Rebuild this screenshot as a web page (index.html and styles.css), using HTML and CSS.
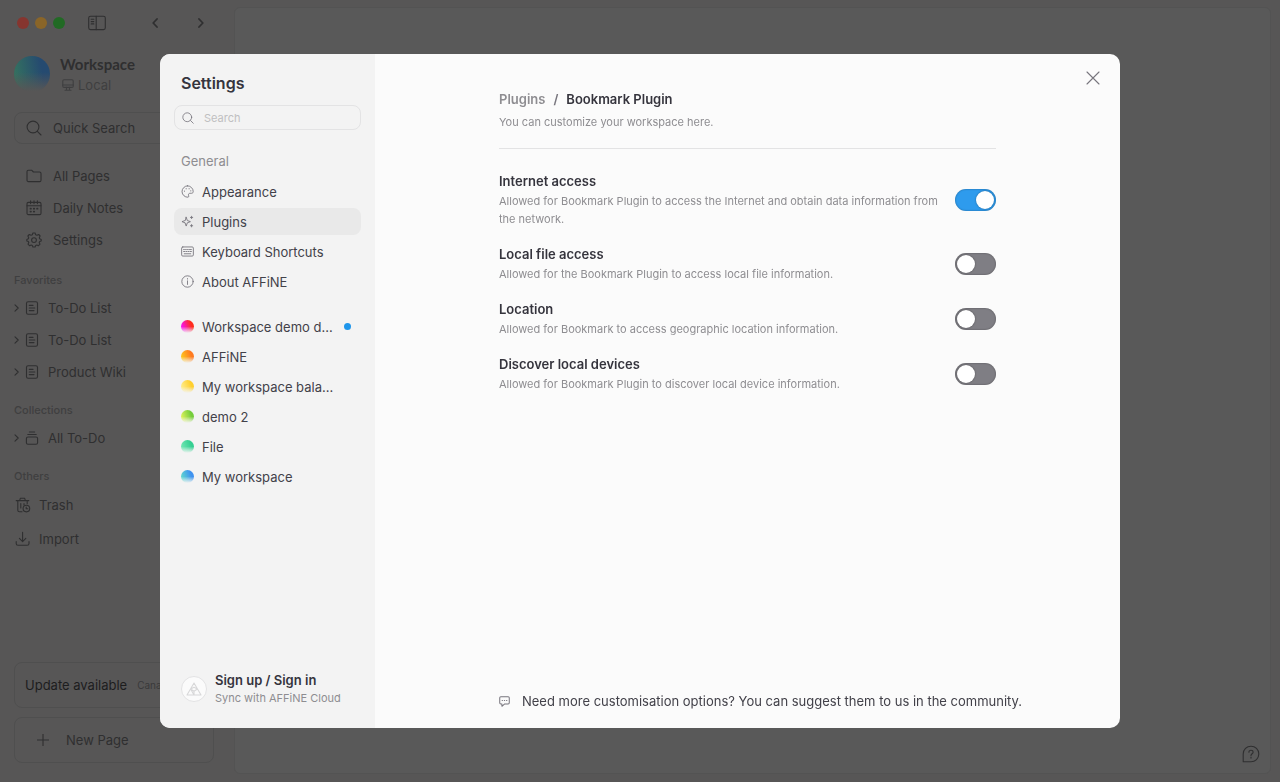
FILE: index.html
```html
<!DOCTYPE html>
<html lang="en">
<head>
    <meta charset="UTF-8">
    <meta name="viewport" content="width=device-width, initial-scale=1.0">
    <title>AFFiNE - Settings</title>
    <link rel="stylesheet" href="styles.css">
</head>
<body>
    <svg class="sprite" aria-hidden="true">
        <symbol id="icon-search" viewBox="0 0 16 16">
            <circle cx="7" cy="7" r="5.9"/>
            <path d="M11.4 11.4L15 15"/>
        </symbol>
        <symbol id="icon-chevron" viewBox="0 0 6 8">
            <path d="M1 .8L4.2 4L1 7.2"/>
        </symbol>
        <symbol id="icon-page" viewBox="0 0 14 14">
            <rect x="1.5" y=".7" width="11" height="12.6" rx="1.6"/>
            <path d="M4.3 4.4H8M4.3 7H9.8M4.3 9.6H9"/>
        </symbol>
    </svg>

    <div class="app">
        <aside class="sidebar">
            <div class="window-bar">
                <span class="light red"></span>
                <span class="light yellow"></span>
                <span class="light green"></span>
                <button class="toggle-sidebar" aria-label="Toggle sidebar">
                    <svg width="18" height="16" viewBox="0 0 18 16">
                        <rect x=".7" y="1.2" width="16.6" height="13.4" rx="1.8"/>
                        <path d="M8.2 1.2V14.6M3.2 4.3H5.8M3.2 6.6H5.8M3.2 8.9H5.8"/>
                    </svg>
                </button>
                <button class="nav-back" aria-label="Back">
                    <svg class="bold" width="6" height="10" viewBox="0 0 6 10"><path d="M5 1L1.2 5L5 9"/></svg>
                </button>
                <button class="nav-forward" aria-label="Forward">
                    <svg class="bold" width="6" height="10" viewBox="0 0 6 10"><path d="M1 1L4.8 5L1 9"/></svg>
                </button>
            </div>

            <div class="workspace">
                <span class="workspace-avatar"></span>
                <div>
                    <div class="workspace-name">Workspace</div>
                    <div class="workspace-type">
                        <svg width="12" height="12" viewBox="0 0 12 12">
                            <rect x=".8" y=".8" width="10.4" height="7.6" rx="1.2"/>
                            <path d="M.8 6H11.2M4.5 8.4V11M7.5 8.4V11M3 11.2H9"/>
                        </svg>
                        Local
                    </div>
                </div>
            </div>

            <button class="quick-search">
                <svg width="16" height="16"><use href="#icon-search"/></svg>
                Quick Search
            </button>

            <nav class="main-nav">
                <a href="#">
                    <svg width="16" height="16" viewBox="0 0 16 16">
                        <path d="M1 3.6C1 2.8 1.6 2.2 2.4 2.2H5.6L7.4 4H13.6C14.4 4 15 4.6 15 5.4V12.2C15 13 14.4 13.6 13.6 13.6H2.4C1.6 13.6 1 13 1 12.2Z"/>
                    </svg>
                    All Pages
                </a>
                <a href="#">
                    <svg width="16" height="16" viewBox="0 0 16 16">
                        <rect x="1" y="2.4" width="14" height="12.2" rx="1.4"/>
                        <path d="M1 5.8H15M4.6 .8V3.6M8 .8V3.6M11.4 .8V3.6"/>
                        <path class="bold" d="M7.8 8.7H8.2M11.1 8.7H11.5M4.5 8.7H4.9M4.5 11.6H4.9M7.8 11.6H8.2"/>
                    </svg>
                    Daily Notes
                </a>
                <a href="#">
                    <svg width="16" height="16" viewBox="0 0 16 16">
                        <path d="M6.9 1H9.1L9.7 2.8L11 3.3L12.7 2.5L14.1 4L13.3 5.8L13.7 6.8L15.2 7.4V9L13.7 9.5L13.2 10.6L14 12.2L12.5 13.7L10.8 13L9.7 13.4L9.1 15H6.9L6.3 13.4L5.2 13L3.5 13.7L2 12.2L2.8 10.6L2.3 9.5L.8 9V7.4L2.3 6.8L2.7 5.8L1.9 4L3.3 2.5L5 3.3L6.3 2.8Z"/>
                        <circle cx="8" cy="8.1" r="2.4"/>
                    </svg>
                    Settings
                </a>
            </nav>

            <h2 class="group-title">Favorites</h2>
            <nav class="page-list">
                <a href="#">
                    <svg width="6" height="8"><use href="#icon-chevron"/></svg>
                    <svg width="14" height="14"><use href="#icon-page"/></svg>
                    <span>To-Do List</span>
                </a>
                <a href="#">
                    <svg width="6" height="8"><use href="#icon-chevron"/></svg>
                    <svg width="14" height="14"><use href="#icon-page"/></svg>
                    <span>To-Do List</span>
                </a>
                <a href="#">
                    <svg width="6" height="8"><use href="#icon-chevron"/></svg>
                    <svg width="14" height="14"><use href="#icon-page"/></svg>
                    <span>Product Wiki</span>
                </a>
            </nav>

            <h2 class="group-title">Collections</h2>
            <nav class="page-list">
                <a href="#">
                    <svg width="6" height="8"><use href="#icon-chevron"/></svg>
                    <svg width="14" height="14" viewBox="0 0 14 14">
                        <rect x="1.4" y="6" width="11.2" height="7.3" rx="1.6"/>
                        <path d="M2.8 3.5H11.2M4.4 1H9.6"/>
                    </svg>
                    <span>All To-Do</span>
                </a>
            </nav>

            <h2 class="group-title">Others</h2>
            <nav class="other-list">
                <a href="#">
                    <svg width="16" height="16" viewBox="0 0 16 16">
                        <path d="M1.2 3.6H13.8M4.6 3.6L5.4 1.2H9.6L10.4 3.6M2.8 3.6V13.2C2.8 14.2 3.4 14.8 4.4 14.8H7M12.2 3.6V6.8M5.8 6.6V11M9 6.6V8"/>
                        <circle cx="11.4" cy="11.6" r="3.3"/>
                        <path d="M11.2 10V11.8H12.8"/>
                    </svg>
                    Trash
                </a>
                <a href="#">
                    <svg width="16" height="16" viewBox="0 0 16 16">
                        <path d="M7.6 1.4V10.4M4.4 7.4L7.6 10.6L10.8 7.4M1.2 10.6V12.4C1.2 13.4 2 14.2 3 14.2H12.2C13.2 14.2 14 13.4 14 12.4V10.6"/>
                    </svg>
                    Import
                </a>
            </nav>

            <div class="sidebar-bottom">
                <button class="update-box">Update available <span class="tag">Canary</span></button>
                <button class="new-page">
                    <svg width="12" height="12" viewBox="0 0 12 12"><path d="M6 0V12M0 6H12"/></svg>
                    New Page
                </button>
            </div>
        </aside>

        <main class="page">
            <button class="help" aria-label="Help">
                <svg width="18" height="18" viewBox="0 0 18 18">
                    <path d="M1.2 16.8V9A7.8 7.8 0 1 1 9 16.8Z"/>
                    <path d="M6.9 7.3C6.9 6 7.8 5.3 9 5.3S11.1 6.1 11.1 7.2C11.1 8.7 9 8.7 9 10.4M9 12.1V13.1"/>
                </svg>
            </button>
        </main>
    </div>

    <div class="backdrop">
        <div class="dialog" role="dialog" aria-label="Settings">
            <aside class="settings-side">
                <h1>Settings</h1>
                <div class="search-box">
                    <svg width="12" height="12"><use href="#icon-search"/></svg>
                    <input type="search" placeholder="Search" aria-label="Search settings">
                </div>

                <h2>General</h2>
                <nav class="settings-list">
                    <a href="#">
                        <svg width="13" height="13" viewBox="0 0 16 16">
                            <path d="M8 1A7 7 0 1 0 8.6 15C10 14.8 9.4 13.4 9.2 12.4C9 11 9.8 10.2 11.2 10.2H13C14.4 10.2 15 9.2 15 8A7 7 0 0 0 8 1Z"/>
                            <path d="M4.3 7.4V7.8M6.4 4.4V4.8M10 4.4V4.8M12 7V7.4"/>
                        </svg>
                        Appearance
                    </a>
                    <a href="#" class="active">
                        <svg width="13" height="13" viewBox="0 0 16 16">
                            <path d="M6.4 2.8L7.8 6.8L11.6 8.2L7.8 9.6L6.4 13.6L5 9.6L1.2 8.2L5 6.8ZM13 1.6V4.4M11.6 3H14.4M13 11.8V14.6M11.6 13.2H14.4"/>
                        </svg>
                        Plugins
                    </a>
                    <a href="#">
                        <svg width="13" height="13" viewBox="0 0 16 16">
                            <rect x=".8" y="2.4" width="14.4" height="11.2" rx="1.4"/>
                            <path d="M3.2 5.6H4.2M5.6 5.6H6.6M8 5.6H9M10.4 5.6H12.8M3.2 8H5M6.4 8H7.4M8.8 8H9.8M11.2 8H12.8M4 10.8H12"/>
                        </svg>
                        Keyboard Shortcuts
                    </a>
                    <a href="#">
                        <svg width="13" height="13" viewBox="0 0 16 16">
                            <circle cx="8" cy="8" r="7"/>
                            <path d="M8 7.2V11.6M8 4.4V5"/>
                        </svg>
                        About AFFiNE
                    </a>
                </nav>

                <nav class="settings-list">
                    <a href="#"><span class="ball pink"></span>Workspace demo d...<span class="dot"></span></a>
                    <a href="#"><span class="ball orange"></span>AFFiNE</a>
                    <a href="#"><span class="ball gold"></span>My workspace bala...</a>
                    <a href="#"><span class="ball lime"></span>demo 2</a>
                    <a href="#"><span class="ball mint"></span>File</a>
                    <a href="#"><span class="ball sky"></span>My workspace</a>
                </nav>

                <a href="#" class="account">
                    <span class="account-logo">
                        <svg width="16" height="14" viewBox="0 0 16 14">
                            <path d="M8 1L15 13H1ZM4.6 7L8 9.2L11.4 7M8 9.2V13M4.6 7L8 13M11.4 7L8 5.2L4.6 7"/>
                        </svg>
                    </span>
                    <span>
                        <strong>Sign up / Sign in</strong>
                        <small>Sync with AFFiNE Cloud</small>
                    </span>
                </a>
            </aside>

            <section class="settings-main">
                <button class="close" aria-label="Close">
                    <svg width="14" height="14" viewBox="0 0 14 14"><path d="M1 1L13 13M13 1L1 13"/></svg>
                </button>

                <header>
                    <div class="breadcrumb"><a href="#">Plugins</a><span>/</span><strong>Bookmark Plugin</strong></div>
                    <p>You can customize your workspace here.</p>
                </header>

                <div class="options">
                    <div class="option">
                        <label for="internet">Internet access
                            <small>Allowed for Bookmark Plugin to access the Internet and obtain data information from the network.</small>
                        </label>
                        <input type="checkbox" class="switch" id="internet" checked>
                    </div>
                    <div class="option">
                        <label for="files">Local file access
                            <small>Allowed for the Bookmark Plugin to access local file information.</small>
                        </label>
                        <input type="checkbox" class="switch" id="files">
                    </div>
                    <div class="option">
                        <label for="location">Location
                            <small>Allowed for Bookmark to access geographic location information.</small>
                        </label>
                        <input type="checkbox" class="switch" id="location">
                    </div>
                    <div class="option">
                        <label for="devices">Discover local devices
                            <small>Allowed for Bookmark Plugin to discover local device information.</small>
                        </label>
                        <input type="checkbox" class="switch" id="devices">
                    </div>
                </div>

                <a href="#" class="community">
                    <svg width="11" height="11" viewBox="0 0 12 12">
                        <path d="M2 .8H10C10.7 .8 11.2 1.3 11.2 2V7.4C11.2 8.1 10.7 8.6 10 8.6H6.2L3.2 11.2V8.6H2C1.3 8.6 .8 8.1 .8 7.4V2C.8 1.3 1.3 .8 2 .8ZM3.4 4.8H3.8M5.8 4.8H6.2M8.2 4.8H8.6"/>
                    </svg>
                    Need more customisation options? You can suggest them to us in the community.
                </a>
            </section>
        </div>
    </div>
</body>
</html>
```
FILE: styles.css
```css
* {
    box-sizing: border-box;
    margin: 0;
    padding: 0;
}

body {
    font-family: Inter, "Liberation Sans", sans-serif;
    font-size: 13px;
    line-height: 20px;
    background-color: #575656;
    color: #2f2f30;
}

a {
    color: inherit;
    text-decoration: none;
}

button {
    font: inherit;
    color: inherit;
    background: none;
    border: none;
}

svg {
    display: block;
    flex-shrink: 0;
    fill: none;
    stroke: currentColor;
    stroke-width: 1.1;
    stroke-linecap: round;
    stroke-linejoin: round;
}

.bold {
    stroke-width: 1.8;
}

.sprite {
    position: absolute;
    width: 0;
    height: 0;
}

/* App behind the dialog */
.app {
    display: flex;
    height: 100vh;
    padding: 7px 9px 8px 0;
}

.sidebar {
    display: flex;
    flex-direction: column;
    flex-shrink: 0;
    width: 234px;
    padding: 0 20px 11px 14px;
}

.window-bar {
    display: flex;
    align-items: center;
    height: 32px;
    padding-left: 3px;
}

.light {
    width: 12px;
    height: 12px;
    margin-right: 6px;
    border-radius: 50%;
}

.red { background-color: #86352f; }
.yellow { background-color: #8a6528; }
.green { background-color: #216a24; }

.toggle-sidebar {
    margin-left: 17px;
}

.nav-back {
    margin-left: 46px;
}

.nav-forward {
    margin-left: 40px;
}

.workspace {
    display: flex;
    align-items: center;
    gap: 10px;
    margin-top: 14px;
}

.workspace-avatar {
    width: 36px;
    height: 36px;
    border-radius: 50%;
    background: linear-gradient(to bottom, transparent 45%, #575656 98%), linear-gradient(80deg, #35735f 5%, #254a70 75%);
}

.workspace-name {
    font-family: Lato, sans-serif;
    font-size: 15px;
    font-weight: 700;
    line-height: 22px;
}

.workspace-type {
    display: flex;
    align-items: center;
    gap: 4px;
    padding-left: 2px;
    color: #3f3f40;
}

.quick-search {
    display: flex;
    align-items: center;
    gap: 11px;
    height: 32px;
    margin-top: 17px;
    padding-left: 11px;
    border: 1px solid #4f4f4f;
    border-radius: 8px;
}

.main-nav {
    margin: 16px 0 2px;
}

.main-nav a {
    display: flex;
    align-items: center;
    gap: 11px;
    height: 32px;
    padding-left: 12px;
}

.group-title {
    margin-top: 12px;
    font-size: 11px;
    font-weight: 500;
    line-height: 20px;
    color: #3f3f40;
}

.page-list {
    padding-top: 2px;
}

.page-list a {
    display: flex;
    align-items: center;
    height: 32px;
}

.page-list svg + svg {
    margin: 0 9px 0 5px;
}

.other-list {
    padding-top: 2px;
}

.other-list a {
    display: flex;
    align-items: center;
    gap: 8px;
    height: 34px;
    padding-left: 1px;
}

.sidebar-bottom {
    display: flex;
    flex-direction: column;
    gap: 9px;
    margin-top: auto;
}

.update-box,
.new-page {
    display: flex;
    align-items: center;
    height: 46px;
    border: 1px solid #4f4f4f;
    border-radius: 8px;
}

.update-box {
    gap: 4px;
    padding-left: 10px;
    color: #1d1d1e;
}

.tag {
    padding: 0 6px;
    font-size: 10px;
    color: #39393a;
}

.new-page {
    gap: 17px;
    padding-left: 22px;
}

.page {
    display: flex;
    flex: 1;
    align-items: flex-end;
    justify-content: flex-end;
    padding: 10px;
    border: 1px solid #535353;
    border-radius: 6px;
    background-color: #595959;
}

/* Settings dialog */
.backdrop {
    position: fixed;
    inset: 0;
    display: flex;
    padding: 54px 12.5%;
}

.dialog {
    display: flex;
    flex: 1;
    overflow: hidden;
    border-radius: 10px;
    background-color: #fbfbfb;
    color: #424149;
}

.settings-side {
    display: flex;
    flex-direction: column;
    flex-shrink: 0;
    width: 215px;
    padding: 17px 14px 21px;
    background-color: #f3f3f3;
}

.settings-side h1 {
    padding-left: 7px;
    font-size: 16px;
    font-weight: 600;
    line-height: 24px;
    color: #35343d;
}

.search-box {
    display: flex;
    align-items: center;
    gap: 10px;
    height: 25px;
    margin-top: 10px;
    padding: 0 7px;
    border: 1px solid #e3e3e4;
    border-radius: 8px;
    color: #77757d;
}

.search-box input {
    width: 100%;
    border: none;
    outline: none;
    background: none;
    font: inherit;
    font-size: 11px;
}

.search-box input::placeholder {
    color: #c0bfc1;
}

.settings-side h2 {
    margin-top: 21px;
    padding-left: 7px;
    font-size: 13px;
    font-weight: 400;
    line-height: 20px;
    color: #8e8d91;
}

.settings-list {
    display: flex;
    flex-direction: column;
    gap: 3px;
    margin-top: 7px;
}

.settings-list + .settings-list {
    margin-top: 18px;
}

.settings-list a {
    display: flex;
    align-items: center;
    gap: 8px;
    height: 27px;
    padding: 0 10px 0 7px;
    border-radius: 8px;
    white-space: nowrap;
}

.settings-list svg {
    color: #77757d;
}

.settings-list .active {
    background-color: #e9e9e9;
}

.ball {
    flex-shrink: 0;
    width: 13px;
    height: 13px;
    border-radius: 50%;
}

.pink { background: linear-gradient(to bottom, transparent 50%, #f3f3f3), linear-gradient(70deg, #f815e8 20%, #ff2d1c 75%); }
.orange { background: linear-gradient(to bottom, transparent 50%, #f3f3f3), linear-gradient(70deg, #ffc61c 15%, #ff7a1f 75%); }
.gold { background: linear-gradient(to bottom, transparent 50%, #f3f3f3), linear-gradient(70deg, #ffec8a 15%, #ffcf2e 75%); }
.lime { background: linear-gradient(to bottom, transparent 50%, #f3f3f3), linear-gradient(70deg, #dcf25a 15%, #75cd3c 75%); }
.mint { background: linear-gradient(to bottom, transparent 50%, #f3f3f3), linear-gradient(70deg, #6fe6b3 15%, #35cf92 75%); }
.sky { background: linear-gradient(to bottom, transparent 50%, #f3f3f3), linear-gradient(70deg, #5fd6cf 15%, #3f92f0 75%); }

.dot {
    width: 7px;
    height: 7px;
    margin-left: auto;
    border-radius: 50%;
    background-color: #1e96eb;
}

.account {
    display: flex;
    align-items: center;
    gap: 8px;
    margin-top: auto;
    padding-left: 7px;
}

.account-logo {
    display: flex;
    align-items: center;
    justify-content: center;
    width: 26px;
    height: 26px;
    border: 1px solid #e3e3e4;
    border-radius: 50%;
    background-color: #fbfbfb;
    color: #d8d8d9;
}

.account strong,
.account small {
    display: block;
}

.account strong {
    font-size: 13px;
    font-weight: 600;
    line-height: 18px;
    color: #35343d;
}

.account small {
    font-size: 11px;
    line-height: 18px;
    color: #8e8d91;
}

.settings-main {
    position: relative;
    display: flex;
    flex: 1;
    flex-direction: column;
    min-width: 0;
    padding: 35px 124px 17px;
}

.close {
    position: absolute;
    top: 17px;
    right: 20px;
    color: #77757d;
}

header {
    padding-bottom: 17px;
    border-bottom: 1px solid #e3e3e4;
}

.breadcrumb {
    display: flex;
    gap: 8px;
    font-weight: 600;
    color: #8e8d91;
}

.breadcrumb span {
    color: #77757d;
}

.breadcrumb strong {
    font-size: 13px;
    font-weight: 600;
    color: #35343d;
}

header p {
    margin-top: 4px;
    font-size: 11px;
    line-height: 18px;
    color: #8e8d91;
}

.options {
    display: flex;
    flex-direction: column;
    gap: 16px;
    margin-top: 22px;
}

.option {
    display: flex;
    align-items: center;
    justify-content: space-between;
    gap: 16px;
}

.option label {
    font-weight: 600;
    color: #35343d;
}

.option small {
    display: block;
    margin-top: 1px;
    font-size: 11px;
    font-weight: 400;
    line-height: 18px;
    color: #8e8d91;
}

.switch {
    appearance: none;
    display: flex;
    flex-shrink: 0;
    align-items: center;
    width: 41px;
    height: 22px;
    padding: 2px;
    border-radius: 11px;
    background-color: #7f7e84;
    box-shadow: inset 0 0 2px rgba(0, 0, 0, 0.4);
    cursor: pointer;
}

.switch::before {
    content: "";
    width: 18px;
    height: 18px;
    border-radius: 50%;
    background-color: #fff;
    box-shadow: 0 0 2px rgba(0, 0, 0, 0.4);
}

.switch:checked {
    justify-content: flex-end;
    background-color: #2e9bed;
}

.community {
    display: flex;
    align-items: center;
    gap: 12px;
    margin-top: auto;
    white-space: nowrap;
}

.community svg {
    color: #77757d;
}
```
